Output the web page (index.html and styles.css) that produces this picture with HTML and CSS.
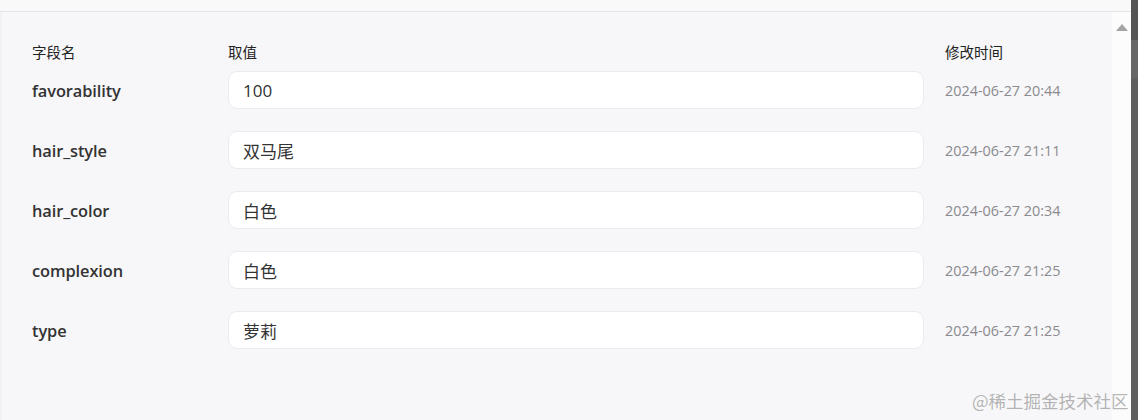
FILE: index.html
```html
<!DOCTYPE html>
<html lang="zh">
<head>
<meta charset="utf-8">
<link rel="stylesheet" href="styles.css">
</head>
<body>
<div class="app">
  <div class="topbar"></div>
  <div class="main">
    <div class="panel">
      <div class="grid">
        <div class="head">字段名</div>
        <div class="head">取值</div>
        <div class="head">修改时间</div>

        <div class="name">favorability</div>
        <div class="value">100</div>
        <div class="time">2024-06-27 20:44</div>

        <div class="name">hair_style</div>
        <div class="value">双马尾</div>
        <div class="time">2024-06-27 21:11</div>

        <div class="name">hair_color</div>
        <div class="value">白色</div>
        <div class="time">2024-06-27 20:34</div>

        <div class="name">complexion</div>
        <div class="value">白色</div>
        <div class="time">2024-06-27 21:25</div>

        <div class="name">type</div>
        <div class="value">萝莉</div>
        <div class="time">2024-06-27 21:25</div>
      </div>
    </div>
    <div class="scrollbar"><div class="arrow"></div></div>
  </div>
</div>
<div class="backdrop"></div>
<div class="watermark">@稀土掘金技术社区</div>
</body>
</html>
```
FILE: styles.css
```css
html, body {
  margin: 0;
  padding: 0;
  height: 420px;
  overflow: hidden;
}
body {
  background: #f9f9fa;
  font-family: "Noto Sans", "Noto Sans CJK SC", sans-serif;
  color: #333;
  position: relative;
  display: flex;
}
.app {
  flex: 1;
  display: flex;
  flex-direction: column;
}
.topbar {
  height: 11px;
  border-bottom: 1px solid #e6e6e9;
  background: #f9f9fa;
}
.main {
  flex: 1;
  display: flex;
}
.panel {
  flex: 1;
  border-left: 2px solid #f1f1f3;
  background: #f7f7f9;
  padding: 30px 0 0 30px;
}
.grid {
  display: grid;
  grid-template-columns: 176px 696px 150px;
  column-gap: 20px;
  row-gap: 22px;
  align-items: center;
}
.head {
  font-family: "Noto Sans CJK SC", sans-serif;
  font-size: 14.5px;
  line-height: 20px;
  height: 20px;
  color: #222;
  margin-bottom: -13px;
}
.head:nth-child(3) { margin-left: 1px; }
.name {
  font-family: "Open Sans", "Noto Sans CJK SC", sans-serif;
  font-weight: 600;
  font-size: 16.4px;
  color: #333;
  letter-spacing: -0.1px;
}
.value {
  height: 38px;
  box-sizing: border-box;
  background: #fff;
  border: 1px solid #ebebee;
  border-radius: 9px;
  padding: 0 14px;
  display: flex;
  align-items: center;
  font-family: "Open Sans", "Noto Sans CJK SC", sans-serif;
  font-size: 17px;
  color: #333;
}
.time {
  font-family: "Open Sans", sans-serif;
  font-size: 14.4px;
  color: #8a8a8f;
  margin-left: 1px;
}
.scrollbar {
  width: 19px;
  background: #fcfcfc;
  padding-top: 12px;
  display: flex;
  justify-content: center;
  align-items: flex-start;
}
.arrow {
  width: 0;
  height: 0;
  border-left: 6px solid transparent;
  border-right: 6px solid transparent;
  border-bottom: 7px solid #a3a3a3;
}
.backdrop {
  width: 7px;
  flex: none;
  background: linear-gradient(#545454 0, #545454 40px, #666 40px, #666 78px, #5f5f5f 78px);
}
.watermark {
  position: absolute;
  left: 972px;
  top: 389px;
  font-family: "Noto Sans CJK SC", serif;
  font-size: 17.5px;
  line-height: 24px;
  color: rgba(120,120,120,0.55);
  white-space: nowrap;
}
```
